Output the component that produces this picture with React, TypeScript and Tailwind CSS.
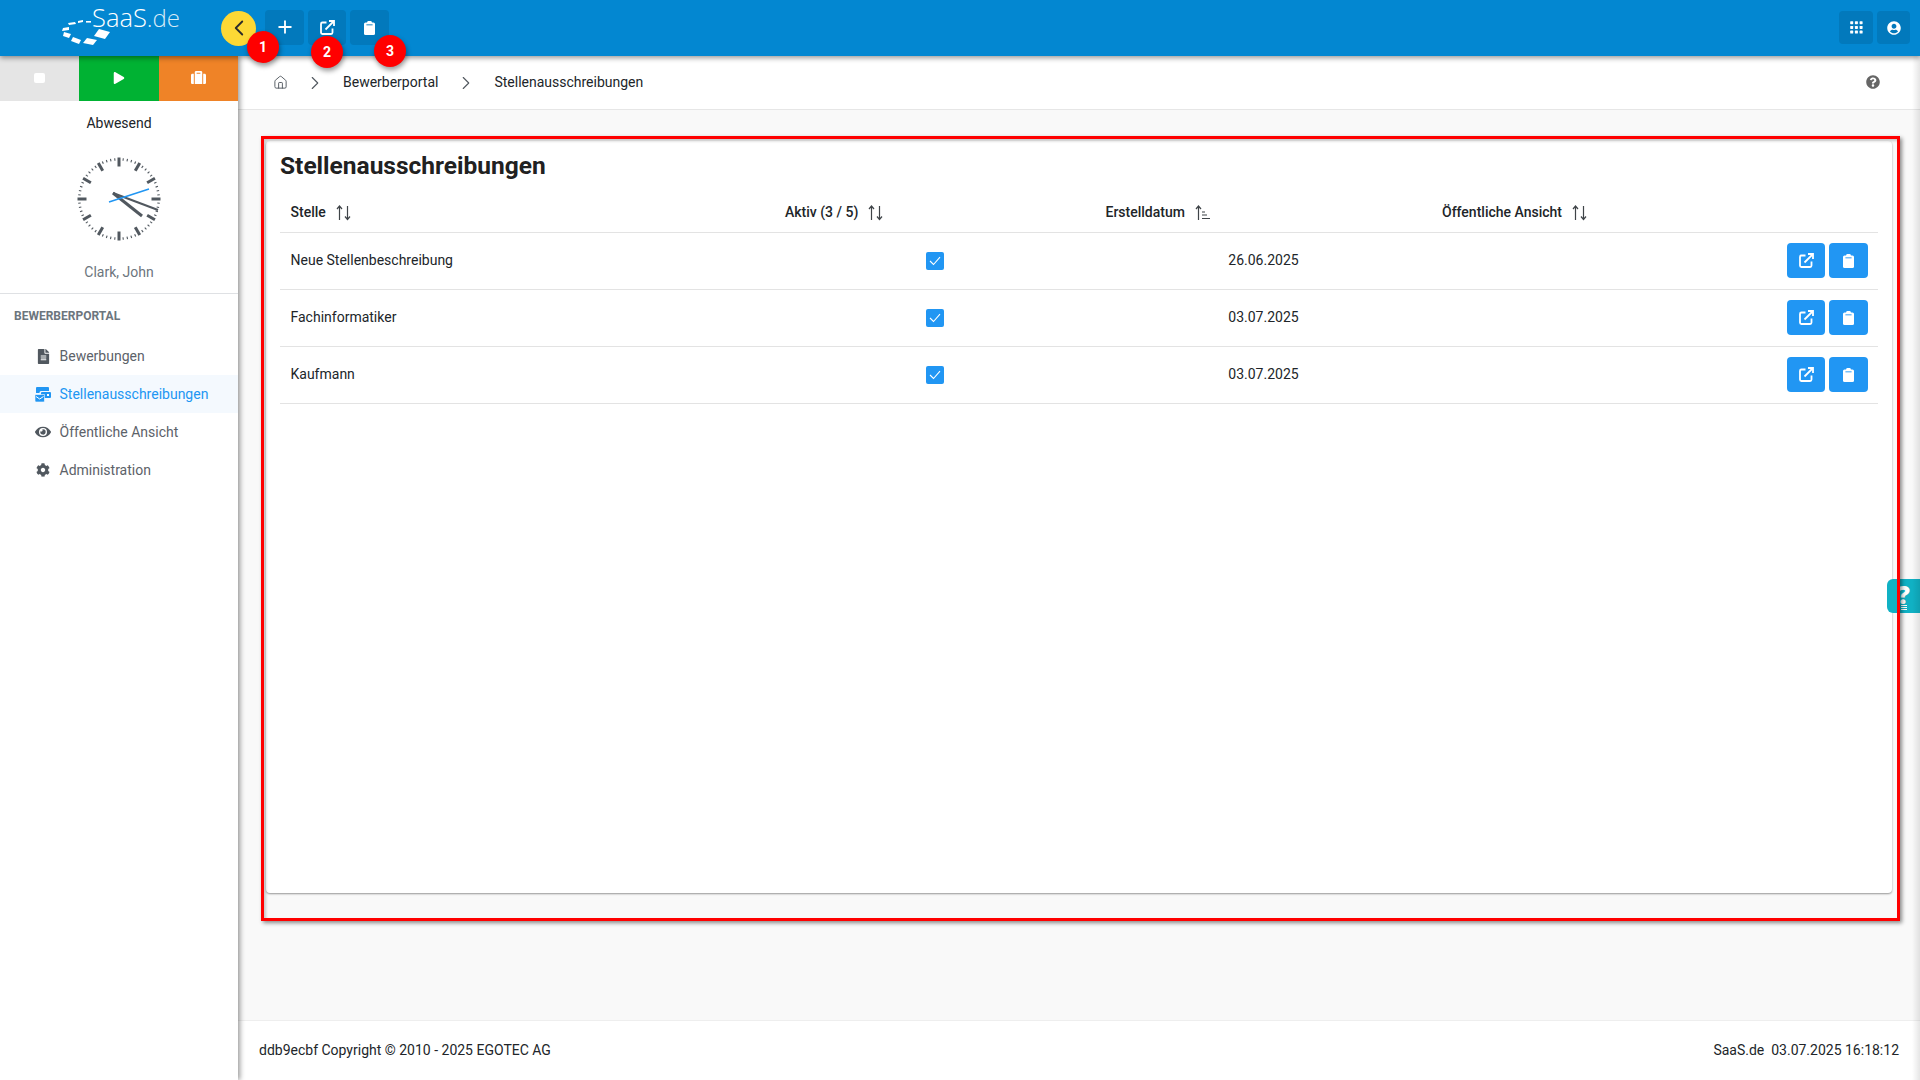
import type { ReactNode } from "react";
import { ChevronLeft, ChevronRight, Home, Plus } from "lucide-react";
import { FaCog, FaEye, FaFileAlt, FaPlay, FaQuestionCircle, FaSuitcase, FaUserCircle } from "react-icons/fa";

const rows = [
  { name: "Neue Stellenbeschreibung", date: "26.06.2025" },
  { name: "Fachinformatiker", date: "03.07.2025" },
  { name: "Kaufmann", date: "03.07.2025" },
];

function Logo() {
  return (
    <svg width="140" height="56" viewBox="50 0 140 56" className="block">
      <g fill="#fff">
        <polygon points="99,29 110,32 105,39 94,36" />
        <polygon points="87,38 97,40 93,45 83,43" />
        <polygon points="73,37 81,40 79,44 71,41" />
        <polygon points="64,32 71,34 69,38 63,36" />
        <polygon points="63,28 69,27 69,30 62,31" />
        <polygon points="68,23 75,22 76,24 69,25" />
        <polygon points="78,21 83,20 83,22 78,23" />
        <rect x="86" y="21" width="5" height="1.6" />
      </g>
      <text x="92" y="27" fill="#fff" fontFamily="'Open Sans', sans-serif" fontSize="25.5" fontWeight="300">
        SaaS<tspan fillOpacity="0.85" fontSize="24">.de</tspan>
      </text>
    </svg>
  );
}

function Clock() {
  const ticks = Array.from({ length: 60 }, (_, i) => i);
  return (
    <svg width="86" height="86" viewBox="-43 -43 86 86" className="block">
      {ticks.map((i) => {
        const hour = i % 5 === 0;
        return (
          <line
            key={i}
            x1="0"
            y1={hour ? -41.5 : -41}
            x2="0"
            y2={hour ? -32.5 : -38.5}
            stroke="#51585f"
            strokeWidth={hour ? 3 : 1.1}
            transform={`rotate(${i * 6})`}
          />
        );
      })}
      <line x1="-6" y1="-6" x2="23" y2="17" stroke="#51585f" strokeWidth="3" />
      <line x1="-6" y1="-6" x2="39" y2="11" stroke="#51585f" strokeWidth="2" />
      <line x1="-10" y1="3" x2="30" y2="-10" stroke="#2196f3" strokeWidth="1.5" />
    </svg>
  );
}

function SortIcon({ sorted }: { sorted?: boolean }) {
  return (
    <svg width="16" height="16" viewBox="0 0 16 16" fill="none" stroke="#3f4448" strokeWidth="1.2" className="mt-[2px] block">
      <path d="M3.5 15V1.5M1 4l2.5-3L6 4" />
      {sorted ? <path d="M7 7h3M7 10h5M7 13.5h8" /> : <path d="M11.5 1v13.5M9 11.5l2.5 3 2.5-3" />}
    </svg>
  );
}

function AppsIcon() {
  const dots = [0, 1, 2];
  return (
    <svg width="13" height="13" viewBox="0 0 13 13" fill="#fff" className="block">
      {dots.map((r) =>
        dots.map((c) => <rect key={`${r}-${c}`} x={c * 4.7 + 0.2} y={r * 4.7 + 0.2} width="3" height="3" rx="0.6" />)
      )}
    </svg>
  );
}

function OpenIcon() {
  return (
    <svg width="15" height="15" viewBox="0 0 15 15" fill="none" stroke="#fff" strokeWidth="1.8" className="mb-[1px] block">
      <path d="M6.5 2.5H2.4A1.4 1.4 0 0 0 1 3.9v8.7A1.4 1.4 0 0 0 2.4 14h8.7a1.4 1.4 0 0 0 1.4-1.4V8.5" />
      <path d="M5.5 9.5L13.5 1.5" />
      <path d="M9 1h5v5" />
    </svg>
  );
}

function ClipIcon({ notch }: { notch: string }) {
  return (
    <svg width="11" height="14" viewBox="0 0 11 14" className="block">
      <rect x="0" y="1.6" width="11" height="12.4" rx="1.5" fill="#fff" />
      <rect x="3.2" y="0" width="4.6" height="3.4" rx="1.2" fill="#fff" />
      <rect x="2.4" y="3.4" width="6.2" height="0.9" fill={notch} />
    </svg>
  );
}

function JobsIcon() {
  return (
    <svg width="16" height="15" viewBox="0 0 16 15" className="block">
      <path d="M2 0h11a1 1 0 0 1 1 1v3H6a1.5 1.5 0 0 0-1.5 1.5V6H1V1a1 1 0 0 1 1-1z" fill="#2196f3" />
      <rect x="6" y="5" width="10" height="6" rx="1" fill="#2196f3" />
      <rect x="12" y="7" width="2" height="2" fill="#fff" />
      <path d="M0 7.5h9.5V14a1 1 0 0 1-1 1H1a1 1 0 0 1-1-1z" fill="#2196f3" stroke="#fff" strokeWidth="0.6" />
      <path d="M1 9.5l3.7 2.5 3.8-2.5" fill="none" stroke="#fff" strokeWidth="1" />
    </svg>
  );
}

function Badge({ n, className }: { n: number; className: string }) {
  return (
    <div
      className={`absolute z-30 flex h-[32px] w-[32px] items-center justify-center rounded-full bg-[#ff0000] text-[14px] font-bold text-white shadow-[1px_3px_5px_rgba(0,0,0,0.4)] ${className}`}
    >
      {n}
    </div>
  );
}

function MenuItem({ icon, label, active }: { icon: ReactNode; label: string; active?: boolean }) {
  return (
    <div
      className={`flex h-[38px] items-center text-[14px] ${active ? "bg-[#f4f9fe] text-[#2196f3]" : "text-[#5c6269]"}`}
    >
      <span className="flex w-[59.5px] shrink-0 items-center justify-center pl-[32px] pr-[5px] text-[#51585f]">{icon}</span>
      {label}
    </div>
  );
}

export default function App() {
  return (
    <div className="relative flex h-screen w-full flex-col overflow-hidden bg-[#f9f9f9] font-['Roboto',sans-serif] text-[14px] text-[#212529]">
      <header className="relative z-20 flex h-[56px] shrink-0 items-center bg-[#0387d1] shadow-[0_2px_5px_rgba(0,0,0,0.4)]">
        <div className="w-[221px] shrink-0 pl-[50px]">
          <Logo />
        </div>
        <button className="flex h-[35px] w-[35px] items-center justify-center rounded-full bg-[#fdd835] text-[#2b2b2b]">
          <ChevronLeft size={26} strokeWidth={1.7} />
        </button>
        <div className="mb-[1px] ml-[9px] flex gap-[4px]">
          <button className="flex h-[35px] w-[39px] items-center justify-center rounded-[4px] bg-[#0279bc] text-white">
            <Plus size={20} strokeWidth={2.2} className="mb-[2px]" />
          </button>
          <button className="flex h-[35px] w-[38px] items-center justify-center rounded-[4px] bg-[#0279bc]">
            <OpenIcon />
          </button>
          <button className="flex h-[35px] w-[39px] items-center justify-center rounded-[4px] bg-[#0279bc]">
            <ClipIcon notch="#0279bc" />
          </button>
        </div>
        <div className="mb-[1px] ml-auto mr-[10px] flex gap-[4px]">
          <button className="flex h-[33px] w-[34px] items-center justify-center rounded-[4px] bg-[#0279bc]">
            <AppsIcon />
          </button>
          <button className="flex h-[33px] w-[33px] items-center justify-center rounded-[4px] bg-[#0279bc] text-white">
            <FaUserCircle size={14} />
          </button>
        </div>
      </header>

      <Badge n={1} className="left-[247px] top-[31px]" />
      <Badge n={2} className="left-[311px] top-[36px]" />
      <Badge n={3} className="left-[374px] top-[35px]" />

      <div className="flex min-h-0 flex-1">
        <aside className="relative z-10 w-[238px] shrink-0 bg-white shadow-[2px_0_5px_rgba(0,0,0,0.4)]">
          <div className="grid h-[45px] grid-cols-[79px_80px_79px] text-white">
            <div className="flex items-center justify-center bg-[#e5e5e5] pb-[1px]">
              <div className="h-[10px] w-[11px] rounded-[2px] bg-white" />
            </div>
            <div className="flex items-center justify-center bg-[#00b233] pb-[2px]">
              <FaPlay size={12} />
            </div>
            <div className="flex items-center justify-center bg-[#ef8327] pb-[2px]">
              <FaSuitcase size={15} />
            </div>
          </div>
          <div className="flex h-[193px] flex-col items-center border-b border-[#dfe1e4]">
            <div className="mt-[14px] leading-[16px]">Abwesend</div>
            <div className="mt-[25px]">
              <Clock />
            </div>
            <div className="mt-[22px] leading-[16px] text-[#6c757d]">Clark, John</div>
          </div>
          <div className="pl-[14px] pt-[15px] text-[12px] font-bold leading-[14px] text-[#6c757d]">BEWERBERPORTAL</div>
          <div className="mt-[14px]">
            <MenuItem icon={<FaFileAlt size={15} />} label="Bewerbungen" />
            <MenuItem icon={<JobsIcon />} label="Stellenausschreibungen" active />
            <MenuItem icon={<FaEye size={16} />} label="Öffentliche Ansicht" />
            <MenuItem icon={<FaCog size={14} />} label="Administration" />
          </div>
        </aside>

        <main className="flex min-w-0 flex-1 flex-col">
          <div className="flex h-[54px] shrink-0 items-center border-b border-[#e6e6e6] bg-white pl-[35px] pr-[40px]">
            <Home size={15} strokeWidth={1.5} className="text-[#51585f]" />
            <ChevronRight size={22} strokeWidth={1.2} className="ml-[16px] text-[#51585f]" />
            <span className="ml-[17px]">Bewerberportal</span>
            <ChevronRight size={22} strokeWidth={1.2} className="ml-[17px] text-[#51585f]" />
            <span className="ml-[17px]">Stellenausschreibungen</span>
            <FaQuestionCircle size={14} className="mb-[1px] ml-auto text-[#666666]" />
          </div>

          <div className="min-h-0 flex-1 pl-[28px] pr-[28px] pt-[31px]">
            <section className="h-[752px] rounded-[4px] bg-white px-[14px] shadow-[0_1px_2px_rgba(0,0,0,0.4)]">
              <h1 className="pt-[11px] text-[24.5px] font-bold leading-[28px] text-[#212121]">Stellenausschreibungen</h1>
              <div className="mt-[9px] grid h-[44px] grid-cols-[495px_320px_337px_446px] items-center border-b border-[#e3e3e3] pt-[3px] font-medium">
                <div className="flex items-center gap-[10px] pl-[10.5px]">
                  Stelle <SortIcon />
                </div>
                <div className="flex items-center gap-[10px] pl-[10px]">
                  Aktiv (3 / 5) <SortIcon />
                </div>
                <div className="flex items-center gap-[10px] pl-[10.5px]">
                  Erstelldatum <SortIcon sorted />
                </div>
                <div className="flex items-center gap-[10px] pl-[10px]">
                  Öffentliche Ansicht <SortIcon />
                </div>
              </div>
              {rows.map((r) => (
                <div
                  key={r.name}
                  className="grid h-[57px] grid-cols-[495px_320px_337px_446px] items-center border-b border-[#e3e3e3]"
                >
                  <div className="pb-[2px] pl-[10.5px]">{r.name}</div>
                  <div className="flex justify-center">
                    <span className="flex h-[18px] w-[18px] items-center justify-center rounded-[2px] bg-[#2196f3]">
                      <svg width="12" height="10" viewBox="0 0 12 10" fill="none" stroke="#fff" strokeWidth="1.1">
                        <path d="M1 5l3.5 3.5L11 1.2" />
                      </svg>
                    </span>
                  </div>
                  <div className="pb-[2px] text-center">{r.date}</div>
                  <div className="mb-[1px] flex justify-end gap-[4px] pr-[10px]">
                    <button className="flex h-[35px] w-[38px] items-center justify-center rounded-[4px] bg-[#2196f3]">
                      <OpenIcon />
                    </button>
                    <button className="flex h-[35px] w-[39px] items-center justify-center rounded-[4px] bg-[#2196f3]">
                      <ClipIcon notch="#2196f3" />
                    </button>
                  </div>
                </div>
              ))}
            </section>
          </div>

          <footer className="flex h-[60px] shrink-0 items-center justify-between border-t border-[#eeeeee] bg-white pb-[1px] pl-[21px] pr-[21px]">
            <span>ddb9ecbf Copyright © 2010 - 2025 EGOTEC AG</span>
            <span>SaaS.de&nbsp; 03.07.2025 16:18:12</span>
          </footer>
        </main>
      </div>

      {/* red annotation frame */}
      <div className="pointer-events-none absolute left-[261px] top-[136px] z-30 h-[785px] w-[1639px] border-[3px] border-[#ff0000] shadow-[2px_2px_4px_rgba(0,0,0,0.45),inset_2px_2px_3px_rgba(0,0,0,0.2)]" />

      {/* help tab */}
      <div className="absolute left-[1887px] top-[579px] z-20 flex h-[34px] w-[33px] flex-col items-center rounded-l-[6px] bg-[#10b1c4] text-white">
        <span className="mt-[5px] font-['Open_Sans',sans-serif] text-[25px] font-extrabold leading-[20px]">?</span>
        <div className="mt-[1px] flex flex-col gap-[1px]">
          <div className="h-[1px] w-[6px] bg-white" />
          <div className="h-[1px] w-[6px] bg-white" />
          <div className="h-[1px] w-[6px] bg-white" />
        </div>
      </div>

      <div className="pointer-events-none absolute bottom-0 right-0 top-[56px] z-20 w-[8px] bg-gradient-to-l from-black/10 to-transparent" />
    </div>
  );
}
